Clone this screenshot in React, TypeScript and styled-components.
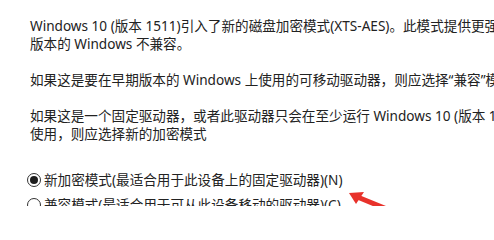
import React from 'react';
import styled, { createGlobalStyle } from 'styled-components';

const GlobalStyle = createGlobalStyle`
    html, body {
        margin: 0;
        padding: 0;
        background: #ffffff;
        overflow: hidden;
    }
`;

const Page = styled.div`
    position: relative;
    width: 494px;
    height: 206px;
    overflow: hidden;
    background: #ffffff;
    color: #222222;
    font-family: "Noto Sans", "Noto Sans CJK SC", sans-serif;
    font-size: 13.6px;
    line-height: 18px;
    padding: 17px 0 0 30px;
    box-sizing: border-box;
`;

const Paragraph = styled.p`
    margin: 0 0 18px 0;
    white-space: nowrap;
`;

const Options = styled.div`
    display: flex;
    flex-direction: column;
    gap: 7px;
    margin-top: 28px;
    margin-left: -3px;
`;

const OptionRow = styled.label`
    display: flex;
    align-items: center;
    gap: 3px;
    height: 18px;
    white-space: nowrap;
`;

const RadioCircle = styled.span<{ checked?: boolean }>`
    position: relative;
    width: 12px;
    height: 12px;
    border: 1.5px solid #333333;
    border-radius: 50%;
    flex-shrink: 0;
    background: #ffffff;

    &::after {
        content: '';
        position: absolute;
        left: 2px;
        top: 2px;
        width: 8px;
        height: 8px;
        border-radius: 50%;
        background: #1c1c1c;
        display: ${props => (props.checked ? 'block' : 'none')};
    }
`;

const Arrow = styled.svg`
    position: absolute;
    left: 346px;
    top: 188px;
    width: 60px;
    height: 30px;
    overflow: visible;
`;

export default function App() {
    return (
        <>
            <GlobalStyle />
            <Page>
                <Paragraph>
                    Windows 10 (版本 1511)引入了新的磁盘加密模式(XTS-AES)。此模式提供更强的完整性支持，但它与较旧
                    <br />
                    版本的 Windows 不兼容。
                </Paragraph>
                <Paragraph>
                    如果这是要在早期版本的 Windows 上使用的可移动驱动器，则应选择“兼容”模式。
                </Paragraph>
                <Paragraph>
                    如果这是一个固定驱动器，或者此驱动器只会在至少运行 Windows 10 (版本 1511)或更高版本的设备上
                    <br />
                    使用，则应选择新的加密模式
                </Paragraph>
                <Options>
                    <OptionRow>
                        <RadioCircle checked />
                        新加密模式(最适合用于此设备上的固定驱动器)(N)
                    </OptionRow>
                    <OptionRow>
                        <RadioCircle />
                        兼容模式(最适合用于可从此设备移动的驱动器)(C)
                    </OptionRow>
                </Options>
                <Arrow viewBox="0 0 60 30">
                    <line x1="9" y1="8" x2="48" y2="24" stroke="#e8322b" strokeWidth="5" strokeLinecap="round" />
                    <polygon points="3,5 18,4 10,16" fill="#e8322b" />
                </Arrow>
            </Page>
        </>
    );
}
